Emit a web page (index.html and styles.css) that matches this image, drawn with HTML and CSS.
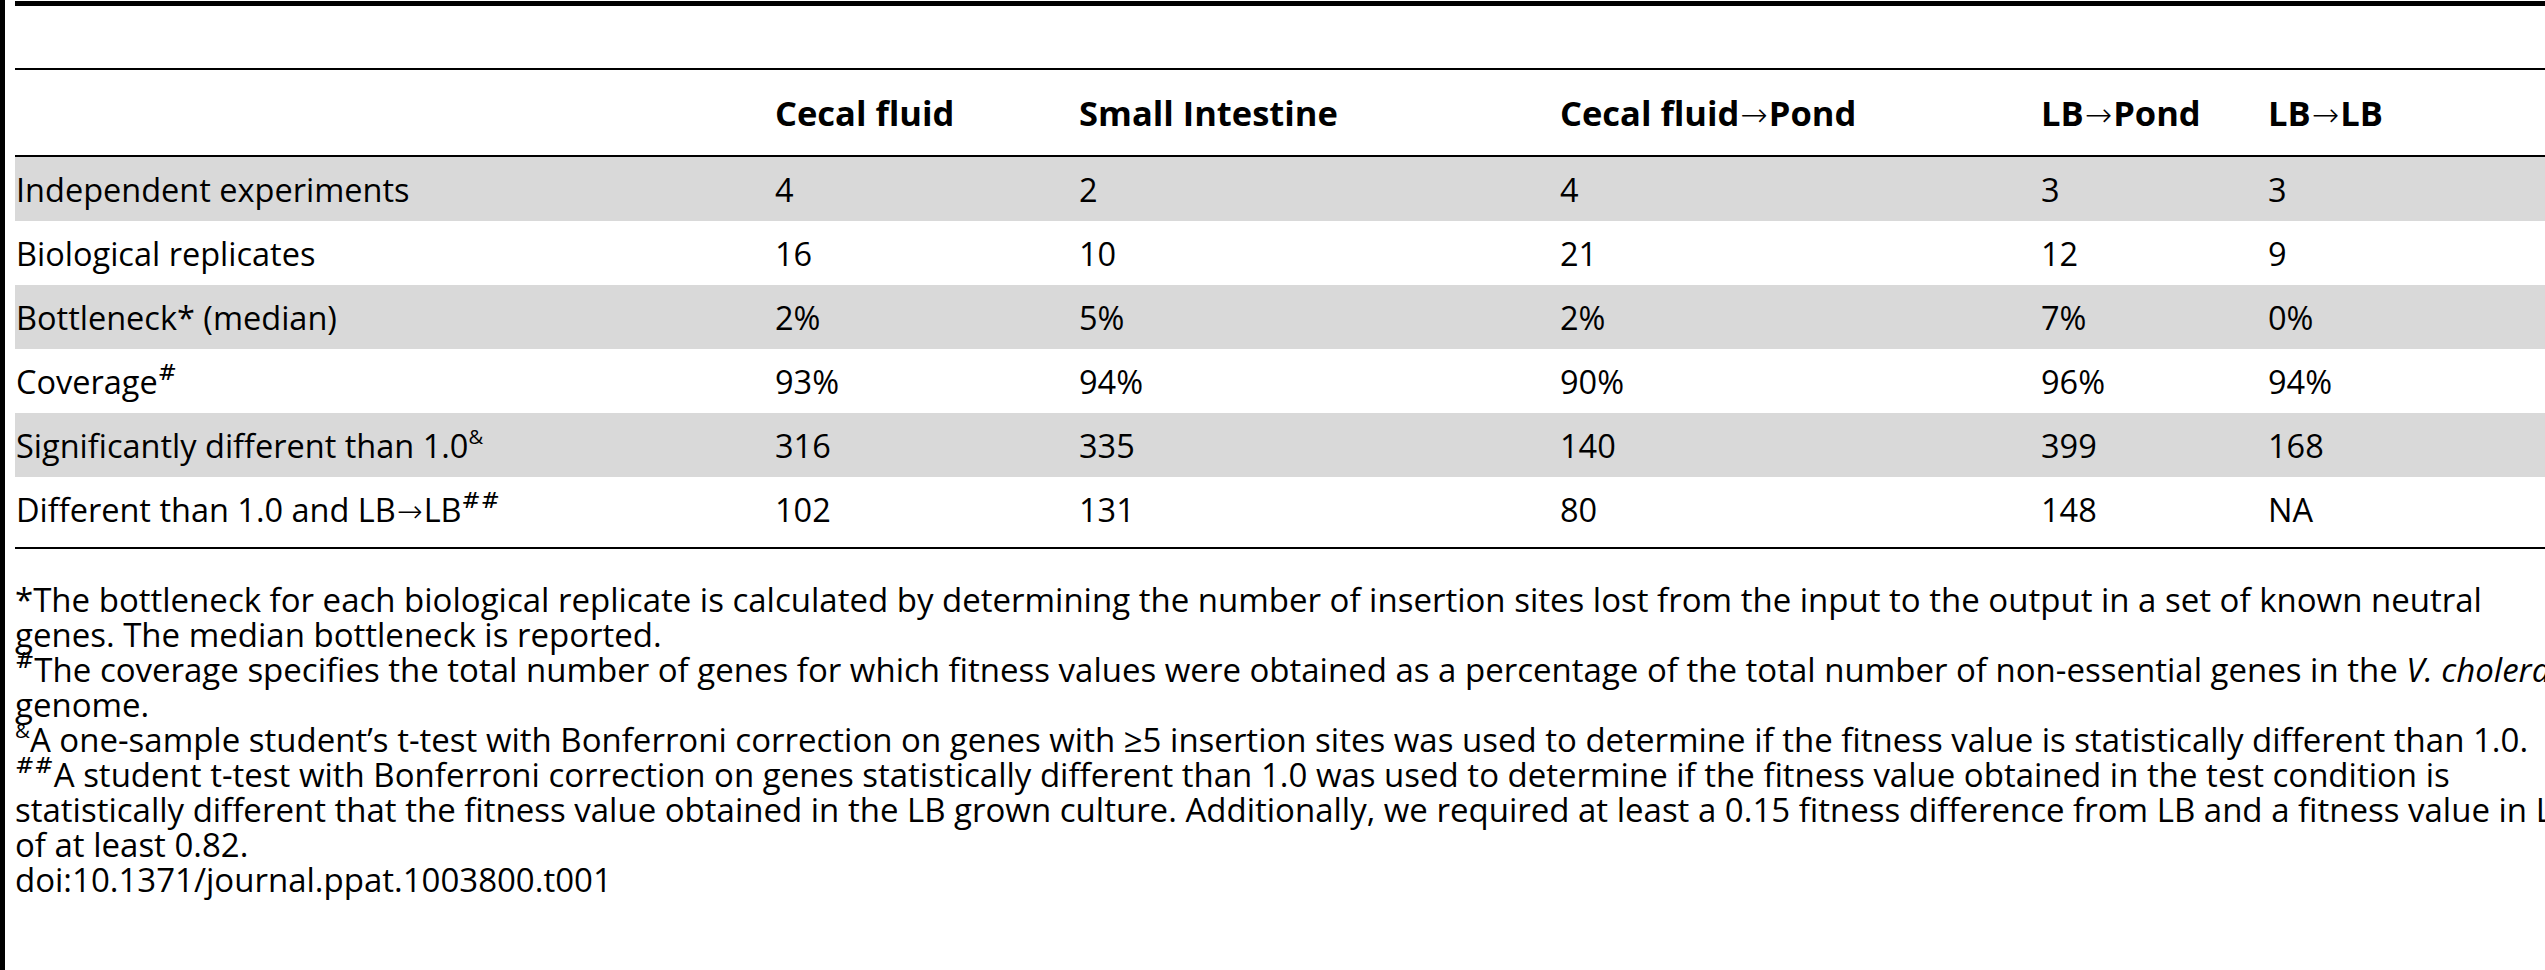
FILE: index.html
```html
<!DOCTYPE html>
<html lang="en">
<head>
<meta charset="utf-8">
<title>Table 1</title>
<link rel="stylesheet" href="styles.css">
</head>
<body>
<div class="frame">
  <div class="content">
    <div class="caption-rule"></div>
    <table class="data">
      <colgroup>
        <col class="c-label">
        <col class="c-cecal">
        <col class="c-small">
        <col class="c-pond">
        <col class="c-lbpond">
        <col class="c-lblb">
      </colgroup>
      <thead>
        <tr>
          <th></th>
          <th>Cecal fluid</th>
          <th>Small Intestine</th>
          <th>Cecal fluid<span class="arr">→</span>Pond</th>
          <th>LB<span class="arr">→</span>Pond</th>
          <th>LB<span class="arr">→</span>LB</th>
        </tr>
      </thead>
      <tbody>
        <tr class="shade">
          <td>Independent experiments</td><td>4</td><td>2</td><td>4</td><td>3</td><td>3</td>
        </tr>
        <tr>
          <td>Biological replicates</td><td>16</td><td>10</td><td>21</td><td>12</td><td>9</td>
        </tr>
        <tr class="shade">
          <td>Bottleneck* (median)</td><td>2%</td><td>5%</td><td>2%</td><td>7%</td><td>0%</td>
        </tr>
        <tr>
          <td>Coverage<sup class="hash">#</sup></td><td>93%</td><td>94%</td><td>90%</td><td>96%</td><td>94%</td>
        </tr>
        <tr class="shade">
          <td>Significantly different than 1.0<sup>&amp;</sup></td><td>316</td><td>335</td><td>140</td><td>399</td><td>168</td>
        </tr>
        <tr class="last">
          <td>Different than 1.0 and LB<span class="arr">→</span>LB<sup class="hash">##</sup></td><td>102</td><td>131</td><td>80</td><td>148</td><td>NA</td>
        </tr>
      </tbody>
    </table>
    <div class="notes">
      <p>*The bottleneck for each biological replicate is calculated by determining the number of insertion sites lost from the input to the output in a set of known neutral<br>genes. The median bottleneck is reported.</p>
      <p><sup class="hash">#</sup>The coverage specifies the total number of genes for which fitness values were obtained as a percentage of the total number of non-essential genes in the <i>V. cholerae</i><br>genome.</p>
      <p><sup>&amp;</sup>A one-sample student’s t-test with Bonferroni correction on genes with ≥5 insertion sites was used to determine if the fitness value is statistically different than 1.0.</p>
      <p><sup class="hash">##</sup>A student t-test with Bonferroni correction on genes statistically different than 1.0 was used to determine if the fitness value obtained in the test condition is<br>statistically different that the fitness value obtained in the LB grown culture. Additionally, we required at least a 0.15 fitness difference from LB and a fitness value in LB<br>of at least 0.82.</p>
      <p>doi:10.1371/journal.ppat.1003800.t001</p>
    </div>
  </div>
</div>
</body>
</html>
```
FILE: styles.css
```css
html, body {
  margin: 0;
  padding: 0;
  background: #fff;
  overflow: hidden;
}

body {
  font-family: "Open Sans", "Noto Sans", "DejaVu Sans", sans-serif;
  color: #000;
}

.frame {
  border-left: 5px solid #000;
  padding-left: 10px;
  min-height: 970px;
  box-sizing: border-box;
}

.content {
  width: 2540px;
  padding-top: 1px;
}

.caption-rule {
  height: 5px;
  background: #000;
  margin-bottom: 62px;
}

.data {
  width: 100%;
  border-collapse: collapse;
  table-layout: fixed;
  font-size: 32.5px;
  border-top: 2px solid #000;
  border-bottom: 2px solid #000;
}

.c-label { width: 759px; }
.c-cecal { width: 304px; }
.c-small { width: 481px; }
.c-pond { width: 481px; }
.c-lbpond { width: 227px; }
.c-lblb { width: 288px; }

.data th,
.data td {
  text-align: left;
  vertical-align: middle;
  padding: 0 0 0 1px;
  white-space: nowrap;
}

.data thead th {
  height: 85px;
  font-size: 34.5px;
  font-weight: 700;
  border-bottom: 2px solid #000;
}

.data tbody td {
  height: 64px;
}

.data tbody tr.last td {
  height: 71px;
  vertical-align: top;
  padding-top: 10px;
  box-sizing: border-box;
}

.data tbody tr.shade td {
  background: #d9d9d9;
}

.arr {
  font-family: "DejaVu Sans", sans-serif;
  font-weight: 200;
  font-size: 0.95em;
  margin: 0 1px;
}

sup {
  font-size: 0.62em;
  line-height: 0;
  vertical-align: 0.7em;
}

sup.hash {
  font-style: italic;
  font-family: "DejaVu Serif", serif;
  font-size: 0.7em;
  vertical-align: 0.6em;
}

.notes {
  margin-top: 33px;
  font-size: 33px;
  line-height: 35px;
}

.notes p {
  margin: 0;
  white-space: nowrap;
}
```
